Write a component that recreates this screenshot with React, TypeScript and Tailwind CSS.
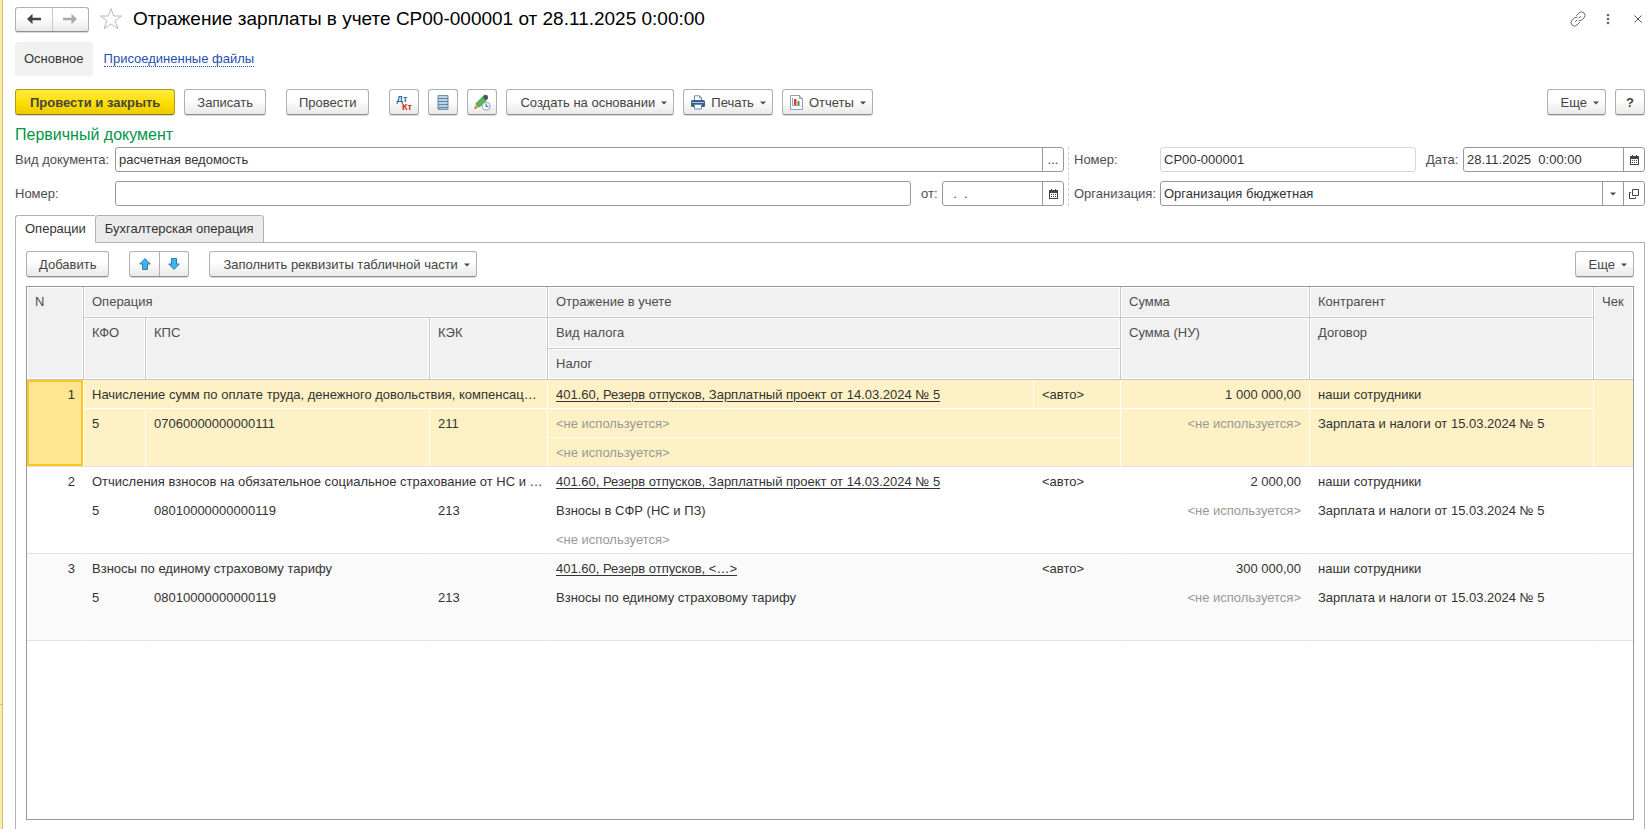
import { useState } from 'react'
import type { ReactNode } from 'react'
import clsx from 'clsx'

interface Operation {
  id: number
  name: string
  kfo: string
  kps: string
  kek: string
  account: string
  taxKind: string
  tax: string
  sum: string
  sumTax: string
  partner: string
  contract: string
}

const UNUSED = '<не используется>'

const operations: Operation[] = [
  {
    id: 1,
    name: 'Начисление сумм по оплате труда, денежного довольствия, компенсац…',
    kfo: '5',
    kps: '07060000000000111',
    kek: '211',
    account: '401.60, Резерв отпусков, Зарплатный проект от 14.03.2024 № 5',
    taxKind: UNUSED,
    tax: UNUSED,
    sum: '1 000 000,00',
    sumTax: UNUSED,
    partner: 'наши сотрудники',
    contract: 'Зарплата и налоги от 15.03.2024 № 5'
  },
  {
    id: 2,
    name: 'Отчисления взносов на обязательное социальное страхование от НС и …',
    kfo: '5',
    kps: '08010000000000119',
    kek: '213',
    account: '401.60, Резерв отпусков, Зарплатный проект от 14.03.2024 № 5',
    taxKind: 'Взносы в СФР (НС и ПЗ)',
    tax: UNUSED,
    sum: '2 000,00',
    sumTax: UNUSED,
    partner: 'наши сотрудники',
    contract: 'Зарплата и налоги от 15.03.2024 № 5'
  },
  {
    id: 3,
    name: 'Взносы по единому страховому тарифу',
    kfo: '5',
    kps: '08010000000000119',
    kek: '213',
    account: '401.60, Резерв отпусков, <…>',
    taxKind: 'Взносы по единому страховому тарифу',
    tax: '',
    sum: '300 000,00',
    sumTax: UNUSED,
    partner: 'наши сотрудники',
    contract: 'Зарплата и налоги от 15.03.2024 № 5'
  }
]

const buttonBase =
  'flex h-[26px] shrink-0 items-center justify-center whitespace-nowrap rounded-[3px] border pt-px'
const buttonPlain =
  'border-[#b0b0b0] border-b-[#909090] bg-linear-to-b from-white from-40% to-[#e9e9e9] text-[#444444] shadow-[0_1px_0_#d8d8d8]'
const buttonPrimary =
  'border-[#b09a1c] border-b-[#8f7c10] bg-linear-to-b from-[#ffe93a] via-[#ffe000] to-[#eccb00] font-bold text-[#444444] shadow-[0_1px_0_#d8d8d8]'

const fieldBox = 'flex h-[25px] min-w-0 overflow-hidden rounded-[3px] border bg-white'
const fieldInput = 'min-w-0 flex-1 bg-transparent px-[3px] text-[#333333] outline-none'
const fieldButton = 'flex w-[21px] shrink-0 items-center justify-center border-l border-[#999999] text-[#444444]'

function Caret() {
  return (
    <svg width="6" height="4" viewBox="0 0 6 4" className="shrink-0">
      <path d="M0 0.5h6L3 3.5z" fill="#4a4a4a" />
    </svg>
  )
}

function Arrow({ color, flip }: { color: string; flip?: boolean }) {
  return (
    <svg width="14" height="12" viewBox="0 0 14 12" className={flip ? 'rotate-180' : ''}>
      <path d="M0 6L5.5 0.8V4.8H14V7.2H5.5V11.2z" fill={color} />
    </svg>
  )
}

function StarIcon() {
  return (
    <svg width="24" height="24" viewBox="0 0 24 24" fill="none" stroke="#b4bcc4">
      <path d="M12 1.5L14.7 9H22.6L16.2 13.6L18.9 21.8L12 17L5.1 21.8L7.8 13.6L1.4 9H9.3z" />
    </svg>
  )
}

function LinkIcon() {
  return (
    <svg width="16" height="16" viewBox="0 0 16 16" fill="none" stroke="#666666" strokeLinecap="round">
      <path d="M6.5 4.5L9 2A3.3 3.3 0 0 1 14 6.8L11.5 9.3L9 9.8" />
      <path d="M9.5 11.5L7 14A3.3 3.3 0 0 1 2 9.2L4.5 6.7L7 6.2" />
      <path d="M5.5 10.5L7 9M9 7L10.5 5.5" />
    </svg>
  )
}

function RegisterIcon() {
  return (
    <svg width="12" height="15" viewBox="0 0 12 15">
      <path d="M1 0.5h10v14H1z" fill="#a9c4d8" stroke="#6d93b0" />
      <path d="M1 3.5h10M1 6.5h10M1 9.5h10M1 12.5h10" stroke="#5d86a5" />
      <path d="M2 2h8M2 5h8M2 8h8M2 11h8" stroke="#d5e3ed" />
    </svg>
  )
}

function PencilClockIcon() {
  return (
    <svg width="17" height="17" viewBox="0 0 17 17">
      <path d="M2 9.5L0.5 15L5.5 13z" fill="#d99b4e" />
      <path d="M2 9.5L8.5 3L12 6.5L5.5 13z" fill="#55bb57" stroke="#397f3c" strokeWidth="0.7" />
      <path d="M8.5 3L10.5 0.8L13.8 1.5L14 4.5L12 6.5z" fill="#46555c" />
      <path d="M0.5 15L1 13L2.3 14.3z" fill="#5b4a34" />
      <circle cx="12.2" cy="12.2" r="4" fill="#ffffff" stroke="#8ca3b6" />
      <path d="M12 9.5V12.5H14.5" fill="none" stroke="#47637a" />
    </svg>
  )
}

function PrinterIcon() {
  return (
    <svg width="14" height="15" viewBox="0 0 14 15">
      <path d="M3.5 5.5V0.8H8.5L10.5 3V5.5" fill="#ffffff" stroke="#6f8aa2" />
      <path d="M8.5 1V3H10.5" fill="none" stroke="#6f8aa2" strokeWidth="0.8" />
      <rect x="0" y="5" width="14" height="7" rx="1.5" fill="#35628c" />
      <path d="M1 7.5h12" stroke="#a8c3da" />
      <path d="M3.5 9.5h7v4.5h-7z" fill="#ffffff" stroke="#6f8aa2" />
    </svg>
  )
}

function ReportIcon() {
  return (
    <svg width="13" height="15" viewBox="0 0 13 15">
      <path d="M0.5 0.5H9.5L12.5 3.5V14.5H0.5z" fill="#ffffff" stroke="#8fa1b0" />
      <path d="M9.5 0.5V3.5H12.5" fill="#c6d2dc" stroke="#8fa1b0" />
      <path d="M2.5 3V10.5H10.5" fill="none" stroke="#93a5b3" />
      <path d="M4 4h2.5v6H4z" fill="#e8372c" />
      <path d="M7.5 6h2v4h-2z" fill="#3b9b3d" />
    </svg>
  )
}

function MoveIcon({ down }: { down?: boolean }) {
  return (
    <svg width="12" height="12" viewBox="0 0 12 12" className={down ? 'rotate-180' : ''}>
      <path d="M6 0.6L11.3 6H8.5V11.5H3.5V6H0.7z" fill="#45b0ee" stroke="#2b7cae" />
    </svg>
  )
}

function CalendarIcon() {
  return (
    <svg width="9" height="10" viewBox="0 0 9 10" shapeRendering="crispEdges">
      <path d="M0 1h9v9H0z" fill="#444444" />
      <path d="M1 4h7v5H1z" fill="#ffffff" />
      <path d="M2 0h1v1H2zM6 0h1v1H6z" fill="#444444" />
      <path d="M2 5h1v1H2zM4 5h1v1H4zM6 5h1v1H6zM2 7h1v1H2zM4 7h1v1H4zM6 7h1v1H6z" fill="#444444" />
    </svg>
  )
}

function OpenIcon() {
  return (
    <svg width="10" height="10" viewBox="0 0 10 10" fill="none" stroke="#444444">
      <path d="M3.5 0.5h6v6h-6z" />
      <path d="M2 3.5H0.5V9.5H6.5V8" />
    </svg>
  )
}

interface ButtonProps {
  children: ReactNode
  className?: string
  label?: string
  primary?: boolean
}

function Button({ children, className, label, primary }: ButtonProps) {
  return (
    <button type="button" aria-label={label} className={clsx(buttonBase, primary ? buttonPrimary : buttonPlain, className)}>
      {children}
    </button>
  )
}

function MenuButton({ children, icon }: { children: ReactNode; icon?: ReactNode }) {
  return (
    <Button className={clsx('gap-[6px] pr-[6px]', icon ? 'pl-[7px]' : 'pl-[13px]')}>
      {icon}
      <span>{children}</span>
      <Caret />
    </Button>
  )
}

function HeadCell({ children, colSpan, rowSpan }: { children: string; colSpan?: number; rowSpan?: number }) {
  return (
    <th
      colSpan={colSpan}
      rowSpan={rowSpan}
      className="h-[31px] border-r border-b border-[#c6c6c6] bg-[#f1f1f1] pt-[6px] pr-1 pl-2 text-left align-top font-normal whitespace-nowrap text-[#4d4d4d] shadow-[inset_0_0_0_1px_#ffffff]"
    >
      {children}
    </th>
  )
}

interface CellProps {
  children?: ReactNode
  active: boolean
  last?: boolean
  colSpan?: number
  rowSpan?: number
  right?: boolean
}

function Cell({ children, active, last, colSpan, rowSpan, right }: CellProps) {
  return (
    <td
      colSpan={colSpan}
      rowSpan={rowSpan}
      className={clsx(
        'h-[29px] truncate border-r border-b pt-[6px] pl-2 align-top',
        active ? 'border-r-white' : 'border-r-transparent',
        last ? 'border-b-[#e3e3e3]' : active ? 'border-b-white' : 'border-b-transparent',
        right ? 'pr-2 text-right' : 'pr-px',
        children === UNUSED && 'text-[#999999]'
      )}
    >
      {children}
    </td>
  )
}

function OperationRows({ item, active, onSelect }: { item: Operation; active: boolean; onSelect: () => void }) {
  return (
    <tbody
      onClick={onSelect}
      className={clsx('text-[#333333]', active ? 'bg-[#fdf1c5]' : item.id % 2 ? 'bg-[#fafafa]' : 'bg-white')}
    >
      <tr>
        <td
          rowSpan={3}
          className={clsx(
            'border-r border-b border-b-[#e3e3e3] px-2 pt-[6px] text-right align-top',
            active
              ? 'border-r-white bg-[#fee592] shadow-[inset_0_0_0_2px_#fdc71f]'
              : 'border-r-transparent'
          )}
        >
          {item.id}
        </td>
        <Cell active={active} colSpan={3}>{item.name}</Cell>
        <Cell active={active}>
          <a href="#account" className="underline underline-offset-2">{item.account}</a>
        </Cell>
        <Cell active={active}>{'<авто>'}</Cell>
        <Cell active={active} right>{item.sum}</Cell>
        <Cell active={active}>{item.partner}</Cell>
        <Cell active={active} rowSpan={3} last />
      </tr>
      <tr>
        <Cell active={active} rowSpan={2} last>{item.kfo}</Cell>
        <Cell active={active} rowSpan={2} last>{item.kps}</Cell>
        <Cell active={active} rowSpan={2} last>{item.kek}</Cell>
        <Cell active={active} colSpan={2}>{item.taxKind}</Cell>
        <Cell active={active} rowSpan={2} last right>{item.sumTax}</Cell>
        <Cell active={active} rowSpan={2} last>{item.contract}</Cell>
      </tr>
      <tr>
        <Cell active={active} colSpan={2} last>{item.tax}</Cell>
      </tr>
    </tbody>
  )
}

export default function App() {
  const [selected, setSelected] = useState(1)

  return (
    <div className="flex min-h-screen bg-white font-['Liberation_Sans',Arial,sans-serif] text-[13px] leading-[18px] text-[#4d4d4d]">
      <div className="flex w-[3px] shrink-0 flex-col border-r border-[#d0bf78] bg-[#fbec9f]">
        <div className="h-[705px] border-b border-[#d0bf78]" />
      </div>

      <main className="flex min-w-0 flex-1 flex-col pr-[5px] pl-3">
        <header className="flex h-[38px] items-center">
          <div className="flex h-[25px] w-[74px] rounded-[3px] border border-[#b0b0b0] border-b-[#909090] bg-linear-to-b from-white from-40% to-[#e9e9e9] shadow-[0_1px_0_#d8d8d8]">
            <button type="button" aria-label="Назад" className="flex flex-1 items-center justify-center border-r border-[#c8c8c8]">
              <Arrow color="#444444" />
            </button>
            <button type="button" aria-label="Вперед" className="flex flex-1 items-center justify-center">
              <Arrow color="#aaaaaa" flip />
            </button>
          </div>
          <button type="button" aria-label="В избранное" className="ml-[10px]">
            <StarIcon />
          </button>
          <h1 className="ml-[10px] flex-1 truncate text-[19px] leading-6 text-black">
            Отражение зарплаты в учете СР00-000001 от 28.11.2025 0:00:00
          </h1>
          <div className="flex items-center">
            <button type="button" aria-label="Получить ссылку">
              <LinkIcon />
            </button>
            <button type="button" aria-label="Действия" className="ml-5">
              <svg width="4" height="12" viewBox="0 0 4 12" fill="#666666">
                <circle cx="2" cy="2" r="1.3" />
                <circle cx="2" cy="6" r="1.3" />
                <circle cx="2" cy="10" r="1.3" />
              </svg>
            </button>
            <button type="button" aria-label="Закрыть" className="mr-[3px] ml-6">
              <svg width="8" height="8" viewBox="0 0 8 8" stroke="#555555">
                <path d="M0.5 0.5L7.5 7.5M7.5 0.5L0.5 7.5" />
              </svg>
            </button>
          </div>
        </header>

        <nav className="mt-1 flex h-[34px] items-center gap-[11px]">
          <a href="#main" className="flex h-full items-center rounded-[3px] bg-[#f1f1f1] px-[9px] text-[#333333]">
            Основное
          </a>
          <a href="#files" className="border-b border-dotted border-[#1f4fb0] leading-[15px] text-[#1f4fb0]">
            Присоединенные файлы
          </a>
        </nav>

        <div className="mt-[13px] flex">
          <Button primary className="px-[14px]">Провести и закрыть</Button>
          <Button className="ml-[9px] px-3">Записать</Button>
          <Button className="ml-5 px-3">Провести</Button>
          <div className="ml-5 flex gap-[9px]">
            <Button className="w-[30px]">
              <span className="flex flex-col text-[9px] leading-[8px] font-bold">
                <span className="pr-[5px] text-[#2f6c99]">Дт</span>
                <span className="pl-[5px] text-[#cc1f10]">Кт</span>
              </span>
            </Button>
            <Button label="Регистр" className="w-[30px]">
              <RegisterIcon />
            </Button>
            <Button label="История изменений" className="w-[30px]">
              <PencilClockIcon />
            </Button>
            <MenuButton>Создать на основании</MenuButton>
            <MenuButton icon={<PrinterIcon />}>Печать</MenuButton>
            <MenuButton icon={<ReportIcon />}>Отчеты</MenuButton>
          </div>
          <div className="ml-auto flex gap-[9px]">
            <MenuButton>Еще</MenuButton>
            <Button className="w-[30px] font-bold">?</Button>
          </div>
        </div>

        <h2 className="mt-[10px] mb-[2px] text-[16px] leading-5 text-[#009646]">Первичный документ</h2>

        <div className="grid grid-cols-[1fr_577px]">
          <div className="flex flex-col gap-[9px] pr-1">
            <div className="flex items-center">
              <label htmlFor="doc-kind" className="w-[100px] shrink-0">Вид документа:</label>
              <div className={clsx(fieldBox, 'flex-1 border-[#999999]')}>
                <input id="doc-kind" defaultValue="расчетная ведомость" className={fieldInput} />
                <button type="button" aria-label="Выбрать вид документа" className={fieldButton}>...</button>
              </div>
            </div>
            <div className="flex items-center">
              <label htmlFor="primary-number" className="w-[100px] shrink-0">Номер:</label>
              <div className={clsx(fieldBox, 'flex-1 border-[#999999]')}>
                <input id="primary-number" className={fieldInput} />
              </div>
              <label htmlFor="primary-date" className="w-[31px] shrink-0 pl-[10px]">от:</label>
              <div className={clsx(fieldBox, 'w-[122px] border-[#999999]')}>
                <input id="primary-date" defaultValue="  .  ." className={fieldInput} />
                <button type="button" aria-label="Выбрать дату" className={fieldButton}>
                  <CalendarIcon />
                </button>
              </div>
            </div>
          </div>

          <div className="flex flex-col gap-[9px] border-l border-dashed border-[#cccccc] pl-[5px]">
            <div className="flex items-center">
              <label htmlFor="doc-number" className="w-[86px] shrink-0">Номер:</label>
              <div className={clsx(fieldBox, 'flex-1 border-[#d6d6d6]')}>
                <input id="doc-number" readOnly defaultValue="СР00-000001" className={fieldInput} />
              </div>
              <label htmlFor="doc-date" className="w-[47px] shrink-0 pl-[10px]">Дата:</label>
              <div className={clsx(fieldBox, 'w-[182px] border-[#999999]')}>
                <input id="doc-date" defaultValue="28.11.2025  0:00:00" className={fieldInput} />
                <button type="button" aria-label="Выбрать дату документа" className={fieldButton}>
                  <CalendarIcon />
                </button>
              </div>
            </div>
            <div className="flex items-center">
              <label htmlFor="organization" className="w-[86px] shrink-0">Организация:</label>
              <div className={clsx(fieldBox, 'flex-1 border-[#999999]')}>
                <div className="relative flex min-w-0 flex-1">
                  <select id="organization" className="w-full appearance-none bg-transparent px-[3px] text-[#333333] outline-none">
                    <option>Организация бюджетная</option>
                  </select>
                  <span className={clsx(fieldButton, 'pointer-events-none absolute inset-y-0 right-0')}>
                    <Caret />
                  </span>
                </div>
                <button type="button" aria-label="Открыть организацию" className={fieldButton}>
                  <OpenIcon />
                </button>
              </div>
            </div>
          </div>
        </div>

        <div role="tablist" className="z-10 mt-[9px] -mb-px flex items-start">
          <button
            type="button"
            role="tab"
            aria-selected="true"
            className="h-7 rounded-tl-[3px] border border-r-0 border-[#b2b2b2] border-b-white bg-white px-[9px] text-[#333333]"
          >
            Операции
          </button>
          <button
            type="button"
            role="tab"
            aria-selected="false"
            className="h-7 rounded-t-[3px] border border-[#b2b2b2] bg-[#ebebeb] px-[9px] text-[#333333]"
          >
            Бухгалтерская операция
          </button>
        </div>

        <section className="flex flex-1 flex-col border-x border-t border-[#b2b2b2] px-[10px] pt-2 pb-[9px]">
          <div className="flex">
            <Button className="px-3">Добавить</Button>
            <div className="ml-5 flex h-[26px] w-[60px] rounded-[3px] border border-[#b0b0b0] border-b-[#909090] bg-linear-to-b from-white from-40% to-[#e9e9e9] shadow-[0_1px_0_#d8d8d8]">
              <button type="button" aria-label="Переместить вверх" className="flex flex-1 items-center justify-center border-r border-[#b0b0b0]">
                <MoveIcon />
              </button>
              <button type="button" aria-label="Переместить вниз" className="flex flex-1 items-center justify-center">
                <MoveIcon down />
              </button>
            </div>
            <div className="ml-5 flex">
              <MenuButton>Заполнить реквизиты табличной части</MenuButton>
            </div>
            <div className="ml-auto flex">
              <MenuButton>Еще</MenuButton>
            </div>
          </div>

          <div className="mt-[9px] flex-1 overflow-hidden border border-[#999999]">
            <table className="w-full table-fixed border-separate border-spacing-0">
              <colgroup>
                <col className="w-[57px]" />
                <col className="w-[62px]" />
                <col className="w-[284px]" />
                <col className="w-[118px]" />
                <col className="w-[486px]" />
                <col className="w-[87px]" />
                <col className="w-[189px]" />
                <col className="w-[284px]" />
                <col className="w-[40px]" />
              </colgroup>
              <thead>
                <tr>
                  <HeadCell rowSpan={3}>N</HeadCell>
                  <HeadCell colSpan={3}>Операция</HeadCell>
                  <HeadCell colSpan={2}>Отражение в учете</HeadCell>
                  <HeadCell>Сумма</HeadCell>
                  <HeadCell>Контрагент</HeadCell>
                  <HeadCell rowSpan={3}>Чек</HeadCell>
                </tr>
                <tr>
                  <HeadCell rowSpan={2}>КФО</HeadCell>
                  <HeadCell rowSpan={2}>КПС</HeadCell>
                  <HeadCell rowSpan={2}>КЭК</HeadCell>
                  <HeadCell colSpan={2}>Вид налога</HeadCell>
                  <HeadCell rowSpan={2}>Сумма (НУ)</HeadCell>
                  <HeadCell rowSpan={2}>Договор</HeadCell>
                </tr>
                <tr>
                  <HeadCell colSpan={2}>Налог</HeadCell>
                </tr>
              </thead>
              {operations.map(item => (
                <OperationRows
                  key={item.id}
                  item={item}
                  active={item.id === selected}
                  onSelect={() => setSelected(item.id)}
                />
              ))}
            </table>
          </div>
        </section>
      </main>
    </div>
  )
}
